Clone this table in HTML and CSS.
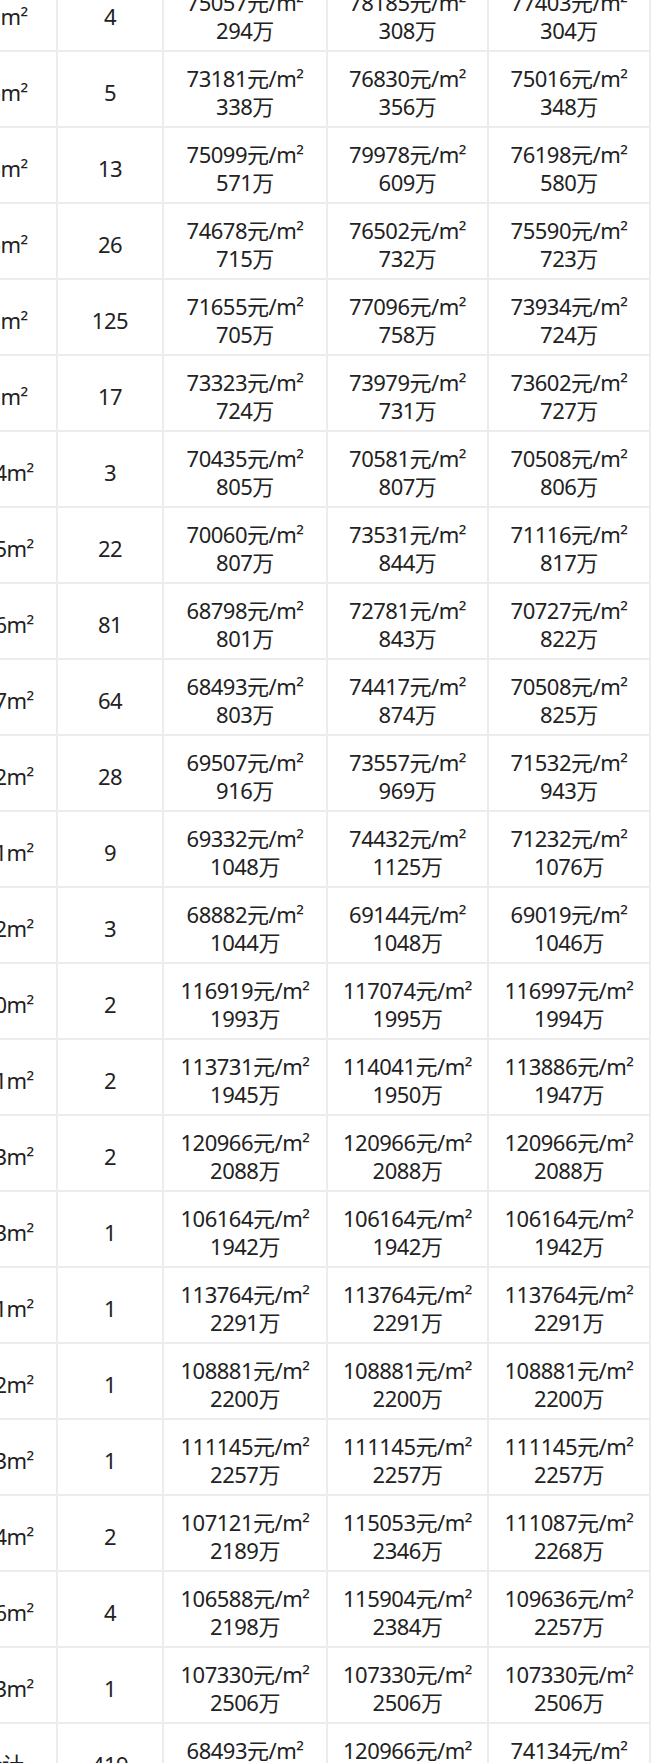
FILE: index.html
```html
<!DOCTYPE html>
<html lang="zh-CN">
<head>
<meta charset="utf-8">
<title>户型面积价格统计</title>
<link rel="stylesheet" href="styles.css">
</head>
<body>
<div class="viewport">
  <div class="grid">
    <div class="c">39m²</div><div class="c">4</div><div class="c">75057元/m²<br>294万</div><div class="c">78185元/m²<br>308万</div><div class="c">77403元/m²<br>304万</div>
    <div class="c">46m²</div><div class="c">5</div><div class="c">73181元/m²<br>338万</div><div class="c">76830元/m²<br>356万</div><div class="c">75016元/m²<br>348万</div>
    <div class="c">76m²</div><div class="c">13</div><div class="c">75099元/m²<br>571万</div><div class="c">79978元/m²<br>609万</div><div class="c">76198元/m²<br>580万</div>
    <div class="c">96m²</div><div class="c">26</div><div class="c">74678元/m²<br>715万</div><div class="c">76502元/m²<br>732万</div><div class="c">75590元/m²<br>723万</div>
    <div class="c">98m²</div><div class="c">125</div><div class="c">71655元/m²<br>705万</div><div class="c">77096元/m²<br>758万</div><div class="c">73934元/m²<br>724万</div>
    <div class="c">99m²</div><div class="c">17</div><div class="c">73323元/m²<br>724万</div><div class="c">73979元/m²<br>731万</div><div class="c">73602元/m²<br>727万</div>
    <div class="c">114m²</div><div class="c">3</div><div class="c">70435元/m²<br>805万</div><div class="c">70581元/m²<br>807万</div><div class="c">70508元/m²<br>806万</div>
    <div class="c">115m²</div><div class="c">22</div><div class="c">70060元/m²<br>807万</div><div class="c">73531元/m²<br>844万</div><div class="c">71116元/m²<br>817万</div>
    <div class="c">116m²</div><div class="c">81</div><div class="c">68798元/m²<br>801万</div><div class="c">72781元/m²<br>843万</div><div class="c">70727元/m²<br>822万</div>
    <div class="c">117m²</div><div class="c">64</div><div class="c">68493元/m²<br>803万</div><div class="c">74417元/m²<br>874万</div><div class="c">70508元/m²<br>825万</div>
    <div class="c">132m²</div><div class="c">28</div><div class="c">69507元/m²<br>916万</div><div class="c">73557元/m²<br>969万</div><div class="c">71532元/m²<br>943万</div>
    <div class="c">151m²</div><div class="c">9</div><div class="c">69332元/m²<br>1048万</div><div class="c">74432元/m²<br>1125万</div><div class="c">71232元/m²<br>1076万</div>
    <div class="c">152m²</div><div class="c">3</div><div class="c">68882元/m²<br>1044万</div><div class="c">69144元/m²<br>1048万</div><div class="c">69019元/m²<br>1046万</div>
    <div class="c">170m²</div><div class="c">2</div><div class="c">116919元/m²<br>1993万</div><div class="c">117074元/m²<br>1995万</div><div class="c">116997元/m²<br>1994万</div>
    <div class="c">171m²</div><div class="c">2</div><div class="c">113731元/m²<br>1945万</div><div class="c">114041元/m²<br>1950万</div><div class="c">113886元/m²<br>1947万</div>
    <div class="c">173m²</div><div class="c">2</div><div class="c">120966元/m²<br>2088万</div><div class="c">120966元/m²<br>2088万</div><div class="c">120966元/m²<br>2088万</div>
    <div class="c">183m²</div><div class="c">1</div><div class="c">106164元/m²<br>1942万</div><div class="c">106164元/m²<br>1942万</div><div class="c">106164元/m²<br>1942万</div>
    <div class="c">201m²</div><div class="c">1</div><div class="c">113764元/m²<br>2291万</div><div class="c">113764元/m²<br>2291万</div><div class="c">113764元/m²<br>2291万</div>
    <div class="c">202m²</div><div class="c">1</div><div class="c">108881元/m²<br>2200万</div><div class="c">108881元/m²<br>2200万</div><div class="c">108881元/m²<br>2200万</div>
    <div class="c">203m²</div><div class="c">1</div><div class="c">111145元/m²<br>2257万</div><div class="c">111145元/m²<br>2257万</div><div class="c">111145元/m²<br>2257万</div>
    <div class="c">204m²</div><div class="c">2</div><div class="c">107121元/m²<br>2189万</div><div class="c">115053元/m²<br>2346万</div><div class="c">111087元/m²<br>2268万</div>
    <div class="c">206m²</div><div class="c">4</div><div class="c">106588元/m²<br>2198万</div><div class="c">115904元/m²<br>2384万</div><div class="c">109636元/m²<br>2257万</div>
    <div class="c">233m²</div><div class="c">1</div><div class="c">107330元/m²<br>2506万</div><div class="c">107330元/m²<br>2506万</div><div class="c">107330元/m²<br>2506万</div>
    <div class="c">合计</div><div class="c">419</div><div class="c">68493元/m²<br>294万</div><div class="c">120966元/m²<br>2506万</div><div class="c">74134元/m²<br>780万</div>
  </div>
</div>
</body>
</html>
```

FILE: styles.css
```css
html, body {
  margin: 0;
  padding: 0;
  background: #ffffff;
}

.viewport {
  width: 660px;
  height: 1763px;
  overflow: hidden;
  background: #ffffff;
}

.grid {
  display: grid;
  grid-template-columns: 108px 104px 162px 159px 160px;
  grid-auto-rows: 74px;
  gap: 2px;
  width: max-content;
  margin-left: -52px;
  margin-top: -24px;
  padding: 0 2px 2px 0;
  background: #ececec;
  font-family: "Noto Sans", "Noto Sans CJK SC", sans-serif;
  font-size: 22px;
  letter-spacing: -0.5px;
  line-height: 28px;
  color: #222222;
}

.c {
  background: #ffffff;
  display: flex;
  align-items: center;
  justify-content: center;
  text-align: center;
  padding-top: 5px;
  box-sizing: border-box;
  white-space: nowrap;
}
```
